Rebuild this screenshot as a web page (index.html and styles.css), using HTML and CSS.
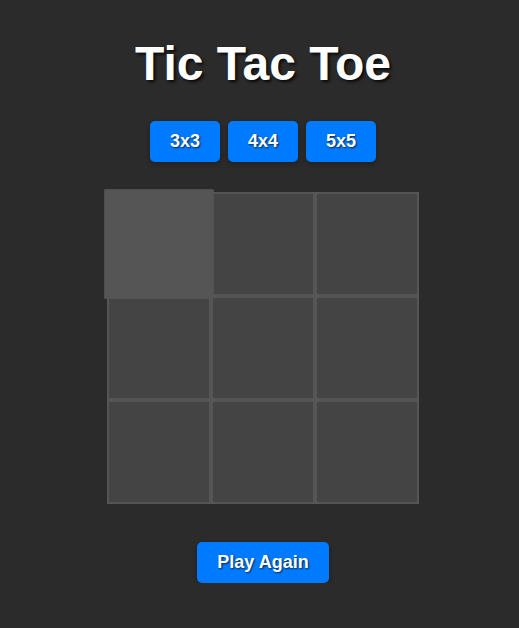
FILE: index.html
```html
<!DOCTYPE html>
<html lang="en">
<head>
<meta charset="utf-8">
<title>Tic Tac Toe</title>
<link rel="stylesheet" href="styles.css">
</head>
<body>
<main class="app">
  <h1 class="title">Tic Tac Toe</h1>
  <div class="sizes">
    <button class="btn">3x3</button>
    <button class="btn">4x4</button>
    <button class="btn">5x5</button>
  </div>
  <div class="board">
    <div class="cell cell-hover"></div>
    <div class="cell"></div>
    <div class="cell"></div>
    <div class="cell"></div>
    <div class="cell"></div>
    <div class="cell"></div>
    <div class="cell"></div>
    <div class="cell"></div>
    <div class="cell"></div>
  </div>
  <button class="btn btn-reset">Play Again</button>
</main>
</body>
</html>
```

FILE: styles.css
```css
html, body {
  margin: 0;
  padding: 0;
  background: #2b2b2b;
}
body {
  font-family: "Liberation Sans", Arial, sans-serif;
  color: #fff;
}
.app {
  display: flex;
  flex-direction: column;
  align-items: center;
  padding-left: 7px;
}
.title {
  margin: 36px 0 30px;
  font-size: 48px;
  font-weight: bold;
  line-height: normal;
  text-shadow: 2px 2px 3px rgba(0, 0, 0, 0.8);
}
.sizes {
  display: flex;
  gap: 8px;
}
.btn {
  font-family: "Liberation Sans", Arial, sans-serif;
  font-size: 18px;
  font-weight: bold;
  line-height: normal;
  color: #fff;
  background: #007bff;
  border: none;
  border-radius: 5px;
  padding: 10px 20px;
  text-shadow: 1px 1px 2px rgba(0, 0, 0, 0.7);
  box-shadow: 0 2px 5px rgba(0, 0, 0, 0.3);
}
.board {
  margin-top: 30px;
  display: grid;
  grid-template-columns: repeat(3, 104px);
  grid-template-rows: repeat(3, 104px);
}
.cell {
  box-sizing: border-box;
  border: 2px solid #555;
  background: #444;
}
.cell-hover {
  background: #555;
  transform: scale(1.05);
  position: relative;
  z-index: 1;
}
.btn-reset {
  margin-top: 38px;
}
```
